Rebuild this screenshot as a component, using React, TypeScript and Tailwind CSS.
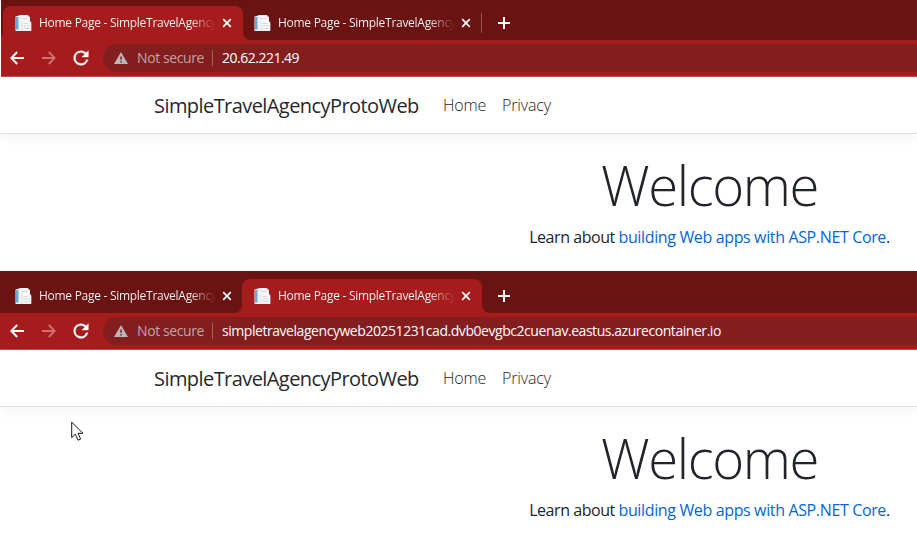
import React from "react";

function DocumentIcon() {
  return (
    <svg width="17" height="17" viewBox="0 0 17 17" className="shrink-0">
      <path d="M0.5 1.5 4 .5H13l2 2V8H10v8H.5z" fill="#eef3f7" />
      <path d="M1 2h2.6v12.5H1z" fill="#66a9d4" />
      <path d="M3.6 1H4.6V15H3.6z" fill="#d3e6f2" />
      <path d="M4.6 0H12.5L15 2.3V14H4.6z" fill="#f4f5f6" />
      <path d="M12.5 0V2.5H15z" fill="#d5d8da" />
      <path d="M6.5 6.5H16.2V16H6.5z" fill="#dfe2e5" />
      <path d="M7.5 5.5H14L16.2 8V15.5H7.5z" fill="#f7f7f8" />
      <path d="M6 3.5H12M8.5 8.5H13M8.5 11H15M8.5 13.5H15" stroke="#cbd1d5" strokeWidth="0.8" />
    </svg>
  );
}

function Flare({ side }: { side: "left" | "right" }) {
  return (
    <svg
      width="8"
      height="8"
      viewBox="0 0 8 8"
      className={side === "left" ? "absolute bottom-0 -left-2" : "absolute bottom-0 -right-2"}
    >
      <path d={side === "left" ? "M8 0A8 8 0 0 1 0 8H8z" : "M0 0A8 8 0 0 0 8 8H0z"} fill="#a61c1d" />
    </svg>
  );
}

function Tab({ active }: { active: boolean }) {
  return (
    <div
      className={
        active
          ? "relative flex h-[34px] w-[240px] shrink-0 items-center rounded-t-lg bg-[#a61c1d] pl-3"
          : "relative flex h-[34px] w-[239px] shrink-0 items-center pl-3"
      }
    >
      {active && <Flare side="left" />}
      {active && <Flare side="right" />}
      <DocumentIcon />
      <span className="ml-[6px] w-[178px] shrink-0 whitespace-nowrap bg-gradient-to-r from-white from-85% to-transparent bg-clip-text pl-px text-[12px] leading-[18px] tracking-[-0.28px] text-transparent">
        Home Page - SimpleTravelAgency
      </span>
      <svg width="10" height="10" viewBox="0 0 10 10" className="ml-[6px] shrink-0">
        <path d="M1.2 1.2 8.8 8.8M8.8 1.2 1.2 8.8" stroke="#fff" strokeWidth="1.7" />
      </svg>
    </div>
  );
}

function TabStrip({ activeIndex }: { activeIndex: number }) {
  const first = activeIndex === 0;
  return (
    <div
      className={
        first
          ? "flex h-10 items-end overflow-hidden bg-[#6b1212] pl-[2px]"
          : "flex h-[42px] items-end overflow-hidden bg-[#6b1212] pl-[3px]"
      }
    >
      <Tab active={first} />
      <div className={first ? "-ml-px" : ""}>
        <Tab active={!first} />
      </div>
      <div className="flex h-[34px] items-center">
        <div className={first ? "h-5 w-px bg-[#9c5455]" : "h-5 w-0"} />
        <svg width="12" height="12" viewBox="0 0 12 12" className="ml-4">
          <path d="M6 0V12M0 6H12" stroke="#fff" strokeWidth="2" />
        </svg>
      </div>
    </div>
  );
}

function Toolbar({ url, inset }: { url: string; inset: boolean }) {
  return (
    <div
      className={
        inset
          ? "flex h-[37px] items-center border-b border-[#c44a4b] bg-[#a61c1d] pl-[9px]"
          : "flex h-[37px] items-center border-b border-[#c44a4b] bg-[#a61c1d] pl-[10px]"
      }
    >
      <svg width="14" height="14" viewBox="0 0 14 14" className="shrink-0">
        <path d="M14 7H1.5M7.2 1 1.3 7l5.9 6" fill="none" stroke="#fff" strokeWidth="2" />
      </svg>
      <svg width="14" height="14" viewBox="0 0 14 14" className="ml-[18px] shrink-0">
        <path d="M0 7H12.5M6.8 1 12.7 7l-5.9 6" fill="none" stroke="#d07172" strokeWidth="1.8" />
      </svg>
      <svg width="22" height="22" viewBox="0 0 24 24" className="ml-[14px] shrink-0">
        <path
          d="M17.65 6.35A7.96 7.96 0 0 0 12 4a8 8 0 1 0 7.73 10h-2.08A6 6 0 1 1 12 6c1.66 0 3.14.69 4.22 1.78L13 11h7V4l-2.35 2.35z"
          fill="#fff"
          stroke="#fff"
          strokeWidth="0.4"
        />
      </svg>
      <div className="ml-[11px] flex h-7 flex-1 items-center overflow-hidden rounded-l-full bg-[#841d1e] pl-[11px] text-[14px] leading-5">
        <svg width="14" height="12" viewBox="0 0 14 12" className="shrink-0">
          <path d="M7 0 14 12H0z" fill="#b9b7b9" />
          <path d="M6.3 4.5H7.8V7.8H6.3zM6.3 9H7.8V10.4H6.3z" fill="#841d1e" />
        </svg>
        <span className="ml-2 w-[68px] whitespace-nowrap pl-px tracking-[-0.4px] text-[#bba6a7]">Not secure</span>
        <div className="ml-2 h-4 w-px bg-[#a76364]" />
        <span
          className={
            inset
              ? "ml-[9px] whitespace-nowrap tracking-[-0.5px] text-white"
              : "ml-[9px] whitespace-nowrap tracking-[-0.45px] text-white"
          }
        >
          {url}
        </span>
      </div>
    </div>
  );
}

function WebPage() {
  return (
    <div className="h-[194px] overflow-hidden bg-white">
      <header className="flex h-[57px] items-center border-b border-[#dee2e6] pl-[154px] shadow-[0_4px_12px_rgba(0,0,0,0.05)]">
        <span className="w-[289px] whitespace-nowrap pt-px text-[20px] tracking-[-0.57px] text-[#26292c]">
          SimpleTravelAgencyProtoWeb
        </span>
        <span className="w-[59px] text-[16px] font-light tracking-[-0.2px] text-[#212529]">Home</span>
        <span className="text-[16px] font-light tracking-[-0.15px] text-[#212529]">Privacy</span>
      </header>
      <main className="w-[1420px] pt-[18px] text-center text-[#212529]">
        <h1 className="h-[66px] text-[54.5px] font-light leading-[66px] tracking-[-1.4px]">
          <span className="pr-px">Welcome</span>
        </h1>
        <p className="mt-[7px] pr-px text-[16px] leading-6 tracking-[-0.36px]">
          <span className="tracking-[-0.45px]">Learn about </span>
          <a className="text-[#0366d6]">building Web apps with ASP.NET Core</a>.
        </p>
      </main>
    </div>
  );
}

function Cursor() {
  return (
    <svg width="13" height="21" viewBox="0 0 13 21" className="absolute left-[71px] top-[421px]">
      <path
        d="M.7 1.2V16.6L4.3 13.2 7 19.2 9.6 18.1 7 12.3H12z"
        fill="#fff"
        stroke="#15151d"
        strokeWidth="1"
      />
    </svg>
  );
}

export default function App() {
  return (
    <div className="relative h-[555px] w-[917px] overflow-hidden bg-white font-['Open_Sans',sans-serif]">
      <section>
        <div className="pl-px">
          <TabStrip activeIndex={0} />
          <Toolbar url="20.62.221.49" inset />
        </div>
        <WebPage />
      </section>
      <section>
        <TabStrip activeIndex={1} />
        <Toolbar url="simpletravelagencyweb20251231cad.dvb0evgbc2cuenav.eastus.azurecontainer.io" inset={false} />
        <WebPage />
      </section>
      <Cursor />
    </div>
  );
}
